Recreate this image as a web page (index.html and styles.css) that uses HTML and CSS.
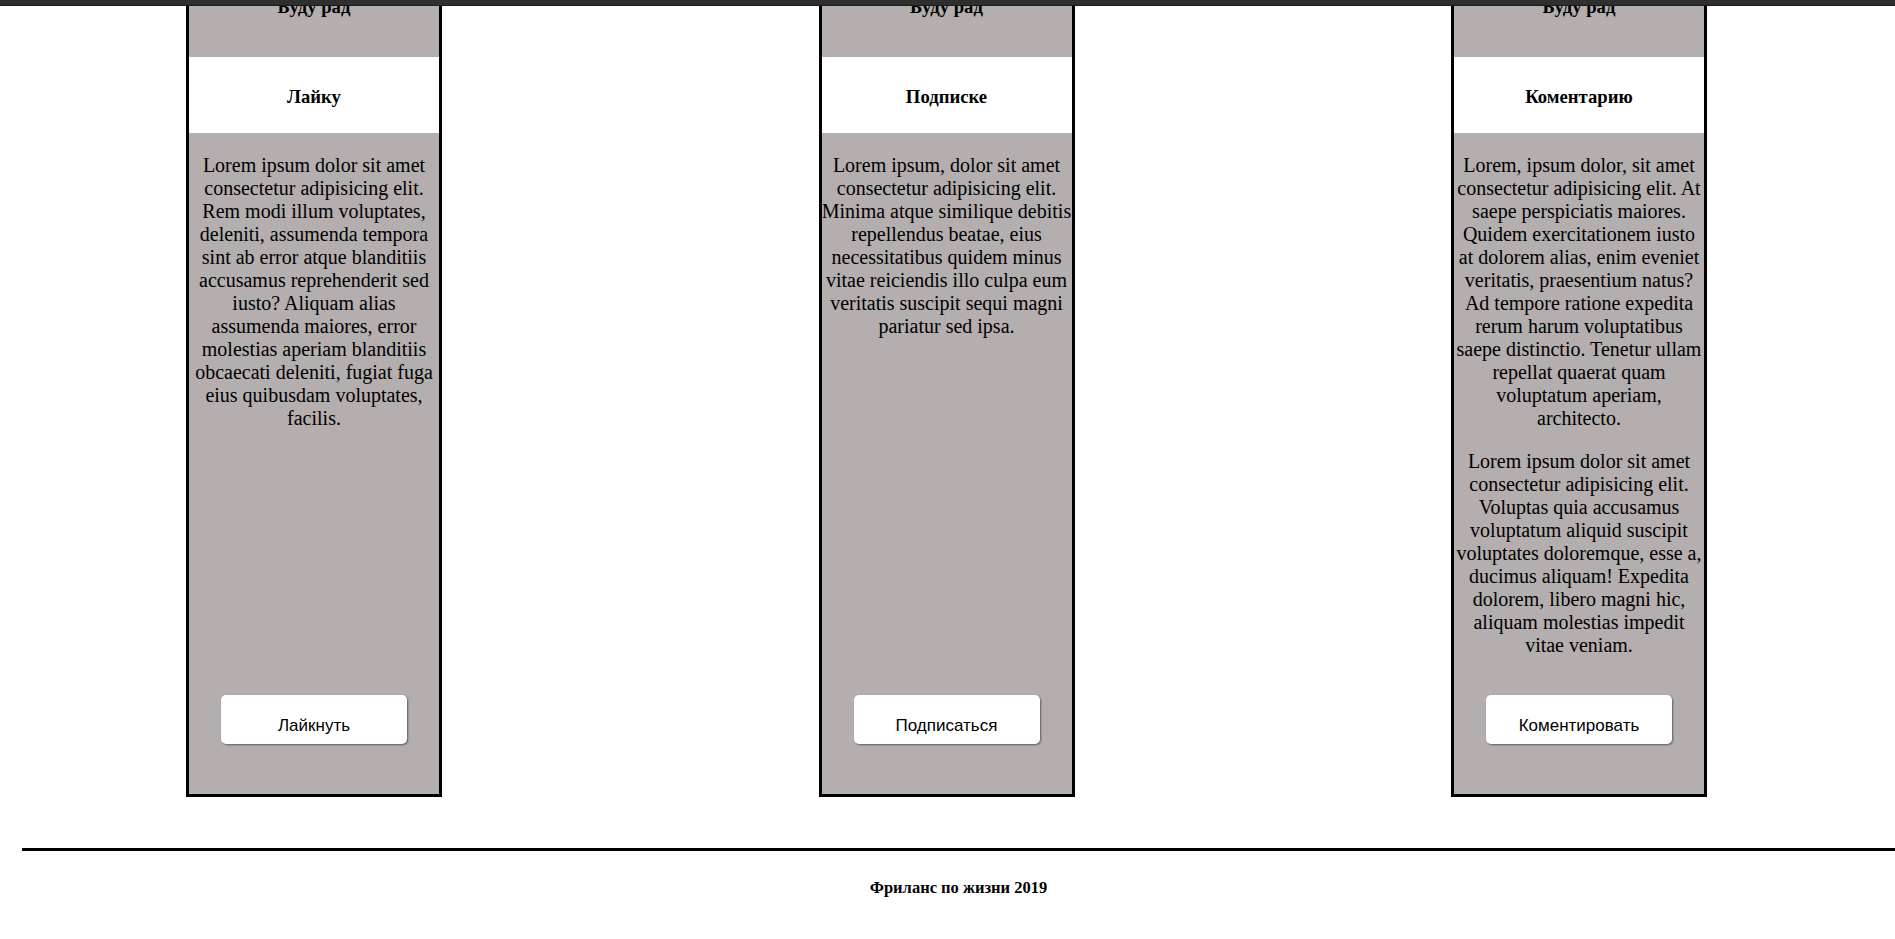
FILE: index.html
```html
<!DOCTYPE html>
<html lang="ru">
<head>
    <meta charset="UTF-8">
    <meta name="viewport" content="width=device-width, initial-scale=1.0">
    <title>Фриланс по жизни</title>
    <link rel="stylesheet" href="styles.css">
</head>
<body>
    <div class="topbar"></div>

    <main class="cards">
        <div class="card">
            <div class="card-head"><h3>Буду рад</h3></div>
            <div class="card-title"><h3>Лайку</h3></div>
            <div class="card-text">
                <p>Lorem ipsum dolor sit amet consectetur adipisicing elit. Rem modi illum voluptates, deleniti, assumenda tempora sint ab error atque blanditiis accusamus reprehenderit sed iusto? Aliquam alias assumenda maiores, error molestias aperiam blanditiis obcaecati deleniti, fugiat fuga eius quibusdam voluptates, facilis.</p>
            </div>
            <div class="card-action">
                <button class="btn">Лайкнуть</button>
            </div>
        </div>

        <div class="card">
            <div class="card-head"><h3>Буду рад</h3></div>
            <div class="card-title"><h3>Подписке</h3></div>
            <div class="card-text">
                <p>Lorem ipsum, dolor sit amet consectetur adipisicing elit. Minima atque similique debitis repellendus beatae, eius necessitatibus quidem minus vitae reiciendis illo culpa eum veritatis suscipit sequi magni pariatur sed ipsa.</p>
            </div>
            <div class="card-action">
                <button class="btn">Подписаться</button>
            </div>
        </div>

        <div class="card">
            <div class="card-head"><h3>Буду рад</h3></div>
            <div class="card-title"><h3>Коментарию</h3></div>
            <div class="card-text">
                <p>Lorem, ipsum dolor, sit amet consectetur adipisicing elit. At saepe perspiciatis maiores. Quidem exercitationem iusto at dolorem alias, enim eveniet veritatis, praesentium natus? Ad tempore ratione expedita rerum harum voluptatibus saepe distinctio. Tenetur ullam repellat quaerat quam voluptatum aperiam, architecto.</p>
                <p>Lorem ipsum dolor sit amet consectetur adipisicing elit. Voluptas quia accusamus voluptatum aliquid suscipit voluptates doloremque, esse a, ducimus aliquam! Expedita dolorem, libero magni hic, aliquam molestias impedit vitae veniam.</p>
            </div>
            <div class="card-action">
                <button class="btn">Коментировать</button>
            </div>
        </div>
    </main>

    <footer class="footer">
        <p>Фриланс по жизни 2019</p>
    </footer>
</body>
</html>
```

FILE: styles.css
```css
:root {
    --card-color: #b4aeae;
    --border-color: #000;
}

body {
    margin: 0;
    font-family: "Liberation Serif", "Times New Roman", serif;
    background: #fff;
    color: #000;
    overflow: hidden;
}

/* dark strip over the top edge */
.topbar {
    position: fixed;
    top: 0;
    left: 0;
    right: 0;
    height: 5px;
    background: #2f2f2f;
    border-bottom: 1px solid #1b1b1b;
    z-index: 10;
}

/* Cards */
.cards {
    display: flex;
    justify-content: space-between;
    padding: 0 188px 0 186px;
    margin-top: -20px;
}

.card {
    width: 250px;
    border: 3px solid var(--border-color);
    background: var(--card-color);
    display: flex;
    flex-direction: column;
    text-align: center;
}

.card h3 {
    margin: 0;
    font-size: 18.72px;
    line-height: 22px;
    font-weight: bold;
}

.card-head {
    padding: 13px 0 39px;
}

.card-title {
    background: #fff;
    padding: 29px 0 25px;
}

.card-text {
    padding-top: 21px;
    font-size: 20px;
    line-height: 23px;
}

.card-text p {
    margin: 0 0 20px;
}

.card-action {
    margin-top: auto;
    padding: 18px 0 50px;
}

/* Button */
.btn {
    width: 186px;
    height: 49px;
    padding: 22px 0 10px;
    font-family: "Liberation Sans", Tahoma, sans-serif;
    font-size: 17px;
    line-height: 17px;
    color: #000;
    background: #fff;
    border: none;
    border-radius: 5px;
    box-shadow: 1px 1px 2px rgba(0, 0, 0, 0.45);
    cursor: pointer;
}

/* Footer */
.footer {
    margin: 51px 0 0 22px;
    border-top: 3px solid var(--border-color);
    text-align: center;
}

.footer p {
    margin: 28px 0;
    font-size: 16.5px;
    line-height: 18px;
    font-weight: bold;
}
```
